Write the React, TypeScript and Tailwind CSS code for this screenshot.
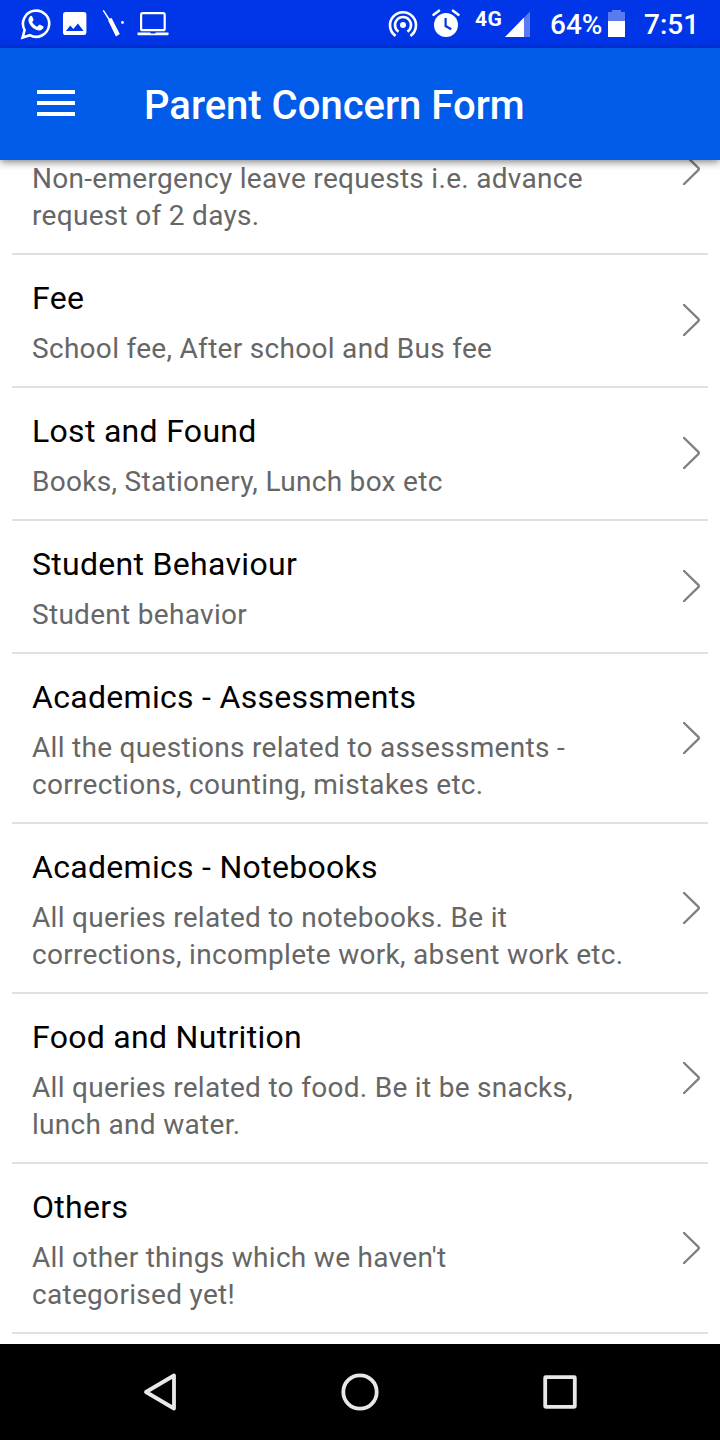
const concerns = [
  { title: "Fee", lines: ["School fee, After school and Bus fee"] },
  { title: "Lost and Found", lines: ["Books, Stationery, Lunch box etc"] },
  { title: "Student Behaviour", lines: ["Student behavior"] },
  {
    title: "Academics - Assessments",
    lines: ["All the questions related to assessments -", "corrections, counting, mistakes etc."],
  },
  {
    title: "Academics - Notebooks",
    lines: ["All queries related to notebooks. Be it", "corrections, incomplete work, absent work etc."],
  },
  {
    title: "Food and Nutrition",
    lines: ["All queries related to food. Be it be snacks,", "lunch and water."],
  },
  { title: "Others", lines: ["All other things which we haven't", "categorised yet!"] },
];

function StatusBar() {
  return (
    <div className="flex h-12 shrink-0 items-start bg-[#0035e8] text-[28px] leading-[50px] font-medium text-white">
      <svg className="mt-[7px] ml-5 h-[33px] w-[31px]" viewBox="0 0 31 33" fill="none">
        <path
          d="M2.6 30.5 4.6 23A13.1 13.1 0 1 1 9.8 28.2Z"
          stroke="white"
          strokeWidth="2.6"
        />
        <path
          d="M10.2 9.2c.7-.7 1.6-.6 2 .2l1.3 3c.2.6 0 1-.4 1.500l-1 1.200c1.200 2.200 3 3.800 5.200 4.700l1.500-1.700c.4-.5.9-.6 1.400-.3l2.800 1.400c.6.300.7.800.5 1.400-.6 2-2.600 3.100-4.600 2.800-5.300-.9-9.700-5.200-10.400-9.700-.200-1.800.500-3.400 1.700-4.500Z"
          fill="white"
        />
      </svg>
      <svg className="mt-3 ml-3 size-6" viewBox="0 0 24 24">
        <path
          fill="white"
          fillRule="evenodd"
          d="M2.600 0h18.300A2.500 2.500 0 0 1 23.400 2.500v18a2.600 2.600 0 0 1-2.500 2.600H2.600A2.600 2.600 0 0 1 0 20.500v-18A2.500 2.500 0 0 1 2.600 0ZM3 19h17.600l-5.700-7.600-4.500 5.700-3.200-3.700Z"
        />
      </svg>
      <svg className="mt-[10px] ml-4 h-7 w-[21px]" viewBox="0 0 21 28">
        <path d="M.6.8 6.500 10" stroke="white" strokeWidth="1.500" strokeLinecap="round" />
        <path d="M5.800 8.800 8.600 8 16.800 24 12.900 26.600 5.400 11Z" fill="white" />
        <circle cx="19.500" cy="12.500" r="1.400" fill="white" />
      </svg>
      <svg className="mt-3 ml-[13px] h-6 w-8" viewBox="0 0 32 24" fill="none">
        <rect x="4.100" y="1.200" width="23.600" height="17" rx="1.500" stroke="white" strokeWidth="2.200" />
        <path d="M.500 20.500h12.600l.9 1h4l.9-1h12.600v2a.7.7 0 0 1-.7.7H1.200a.7.7 0 0 1-.7-.7Z" fill="white" />
      </svg>

      <svg
        className="mt-[10px] ml-auto h-7 w-[30px]"
        viewBox="0 0 30 28"
        fill="none"
        stroke="white"
        strokeWidth="2.600"
      >
        <path d="M7.600 25.900a13 13 0 1 1 14.800 0" />
        <path d="M10.600 21.700a8 8 0 1 1 8.800 0" />
        <circle cx="15" cy="15" r="3" fill="white" stroke="none" />
      </svg>
      <svg className="mt-[9px] ml-[13px] h-7 w-[30px]" viewBox="0 0 30 28" fill="none">
        <circle cx="15" cy="16" r="12" fill="white" />
        <path d="M2.600 5.800 8 1.700M27.400 5.800 22 1.700" stroke="white" strokeWidth="2.600" strokeLinecap="round" />
        <path d="M14.600 9v8l5.600 3.300" stroke="#0035e8" strokeWidth="2.200" />
      </svg>
      <span className="ml-[14px] w-7 text-[21px] leading-[38px] font-bold tracking-[0.5px]">4G</span>
      <svg className="mt-[11px] ml-0.5 h-[26px] w-[25px]" viewBox="0 0 25 26">
        <path d="M25 .500V26H0Z" fill="white" fillOpacity="0.350" />
        <path d="M19 6.600V26H0Z" fill="white" />
      </svg>
      <span className="ml-5 w-[53px]">64%</span>
      <svg className="mt-[10px] ml-[5px] h-[27px] w-[17px]" viewBox="0 0 17 27">
        <path d="M4 0h9v2h4v9H0V2h4Z" fill="white" fillOpacity="0.350" />
        <path d="M0 11h17v16H0Z" fill="white" />
      </svg>
      <span className="mr-[22px] ml-[19px] w-[54px]">7:51</span>
    </div>
  );
}

function Header() {
  return (
    <header className="relative z-10 flex h-28 shrink-0 items-center bg-[#005ce8] pl-[37px] shadow-[0_2px_8px_rgba(0,0,0,0.5)]">
      <button className="flex w-[38px] flex-col gap-[7px] pb-0.5" aria-label="Menu">
        <span className="h-1 w-full bg-white" />
        <span className="h-1 w-full bg-white" />
        <span className="h-1 w-full bg-white" />
      </button>
      <h1 className="ml-[69px] pt-1 text-[40px] leading-[48px] font-medium whitespace-nowrap text-white">
        Parent Concern Form
      </h1>
    </header>
  );
}

function Chevron({ className = "" }: { className?: string }) {
  return (
    <svg className={`h-8 w-[18px] shrink-0 ${className}`} viewBox="0 0 18 32" fill="none">
      <path
        d="M-1-1 15.300 14.800Q16.400 16 15.300 17.200L-1 33"
        stroke="#808080"
        strokeWidth="2.300"
      />
    </svg>
  );
}

function Description({ lines }: { lines: string[] }) {
  return (
    <p className="text-[28px] leading-[37px] tracking-[0.3px] whitespace-nowrap text-[#666]">
      {lines.map((line) => (
        <span key={line} className="block">
          {line}
        </span>
      ))}
    </p>
  );
}

function ConcernRow({ title, lines }: { title: string; lines: string[] }) {
  return (
    <li className="flex items-center justify-between border-b-2 border-[#e0e0e0] pt-6 pr-[7px] pb-[19px] pl-5">
      <div>
        <h2 className="mb-[13px] text-[32px] leading-[38px] tracking-[0.3px] text-black">{title}</h2>
        <Description lines={lines} />
      </div>
      <Chevron className="relative top-[-3px]" />
    </li>
  );
}

function NavBar() {
  return (
    <nav className="flex h-24 shrink-0 items-center justify-between bg-black px-[140px]">
      <svg className="size-10" viewBox="0 0 40 40" fill="none" stroke="#e8e8e8" strokeWidth="3.800">
        <path d="M34 3.500v33L6 20Z" strokeLinejoin="round" />
      </svg>
      <svg className="size-10" viewBox="0 0 40 40" fill="none" stroke="#e8e8e8" strokeWidth="3.800">
        <circle cx="20" cy="20" r="16.700" />
      </svg>
      <svg className="size-10" viewBox="0 0 40 40" fill="none" stroke="#e8e8e8" strokeWidth="3.800">
        <rect x="5.200" y="5.200" width="29.600" height="29.600" rx="0.500" strokeLinejoin="round" />
      </svg>
    </nav>
  );
}

export default function App() {
  return (
    <div className="flex h-[1440px] w-[720px] flex-col overflow-hidden bg-white font-[Roboto,sans-serif]">
      <StatusBar />
      <Header />
      <main className="flex-1 overflow-hidden px-3">
        <ul>
          <li className="flex items-start justify-between border-b-2 border-[#e0e0e0] pr-[7px] pb-[19px] pl-5">
            <Description lines={["Non-emergency leave requests i.e. advance", "request of 2 days."]} />
            <Chevron className="-mt-[7px]" />
          </li>
          {concerns.map((concern) => (
            <ConcernRow key={concern.title} {...concern} />
          ))}
        </ul>
      </main>
      <NavBar />
    </div>
  );
}
